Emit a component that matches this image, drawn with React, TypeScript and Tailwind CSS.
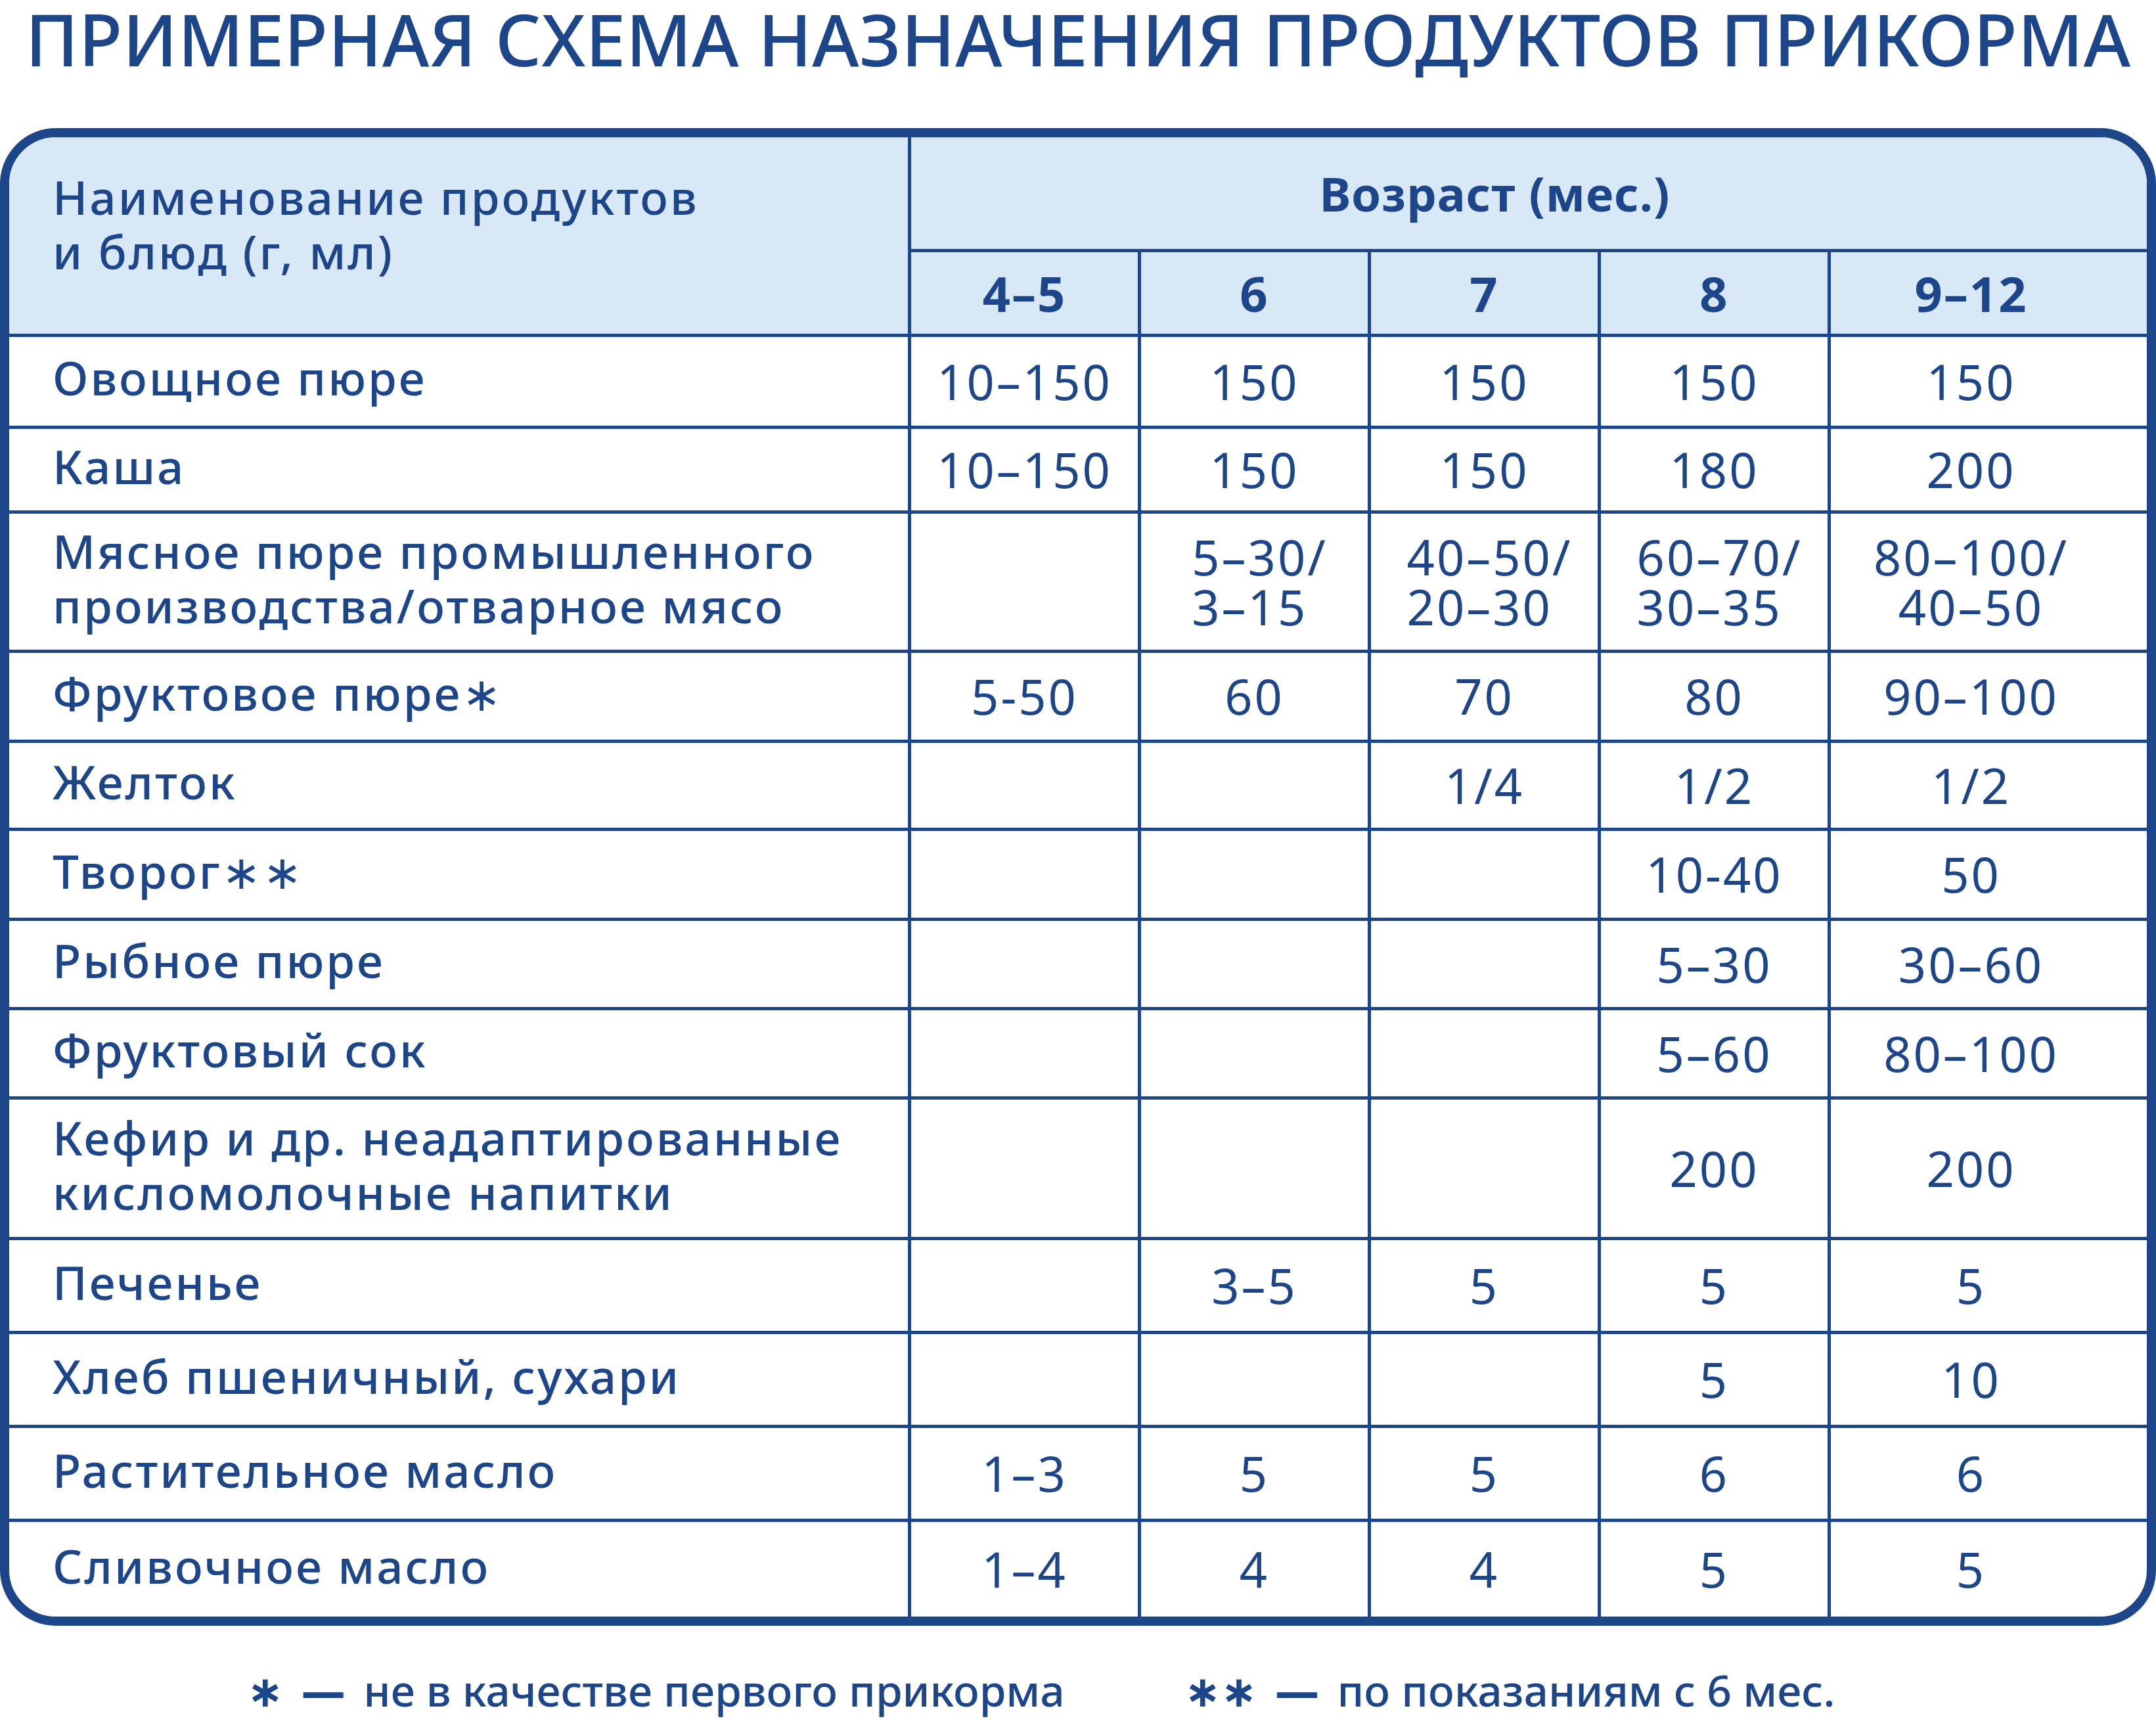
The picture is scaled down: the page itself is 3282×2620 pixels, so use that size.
import React from 'react'

// Примерная схема назначения продуктов прикорма
const BLUE = 'text-[#1d4589]'

type Cell = string | string[]

type Row = {
  label: string[]
  h: string
  values: Cell[]
  leftAlign?: boolean
}

const rows: Row[] = [
  { label: ['Овощное пюре'], h: 'h-[140px]', values: ['10–150', '150', '150', '150', '150'] },
  { label: ['Каша'], h: 'h-[129px]', values: ['10–150', '150', '150', '180', '200'] },
  {
    label: ['Мясное пюре промышленного', 'производства/отварное мясо'],
    h: 'h-[212px]',
    values: ['', ['5–30/', '3–15'], ['40–50/', '20–30'], ['60–70/', '30–35'], ['80–100/', '40–50']],
    leftAlign: true,
  },
  { label: ['Фруктовое пюре∗'], h: 'h-[137px]', values: ['5-50', '60', '70', '80', '90–100'] },
  { label: ['Желток'], h: 'h-[134px]', values: ['', '', '1/4', '1/2', '1/2'] },
  { label: ['Творог∗∗'], h: 'h-[137px]', values: ['', '', '', '10-40', '50'] },
  { label: ['Рыбное пюре'], h: 'h-[136px]', values: ['', '', '', '5–30', '30–60'] },
  { label: ['Фруктовый сок'], h: 'h-[136px]', values: ['', '', '', '5–60', '80–100'] },
  {
    label: ['Кефир и др. неадаптированные', 'кисломолочные напитки'],
    h: 'h-[214px]',
    values: ['', '', '', '200', '200'],
  },
  { label: ['Печенье'], h: 'h-[143px]', values: ['', '3–5', '5', '5', '5'] },
  { label: ['Хлеб пшеничный, сухари'], h: 'h-[143px]', values: ['', '', '', '5', '10'] },
  { label: ['Растительное масло'], h: 'h-[143px]', values: ['1–3', '5', '5', '6', '6'] },
  { label: ['Сливочное масло'], h: 'h-[149px]', values: ['1–4', '4', '4', '5', '5'] },
]

const ages = ['4–5', '6', '7', '8', '9–12']

function ValueCell({ value, last, leftAlign }: { value: Cell; last: boolean; leftAlign?: boolean }) {
  const text = Array.isArray(value) ? value.join('\n') : value
  return (
    <div
      className={`flex items-center justify-center border-l-[5px] border-[#1d4589] ${last ? 'pr-[54px]' : ''}`}
    >
      {text && (
        <div
          className={`whitespace-pre-line text-[74px] leading-[76px] font-normal tracking-[3px] ${
            leftAlign && !last ? 'text-left pl-[16px]' : 'text-center'
          }`}
        >
          {text}
        </div>
      )}
    </div>
  )
}

export default function App() {
  return (
    <div
      className={`w-[3282px] h-[2620px] bg-white ${BLUE} font-['Noto_Sans','DejaVu_Sans',sans-serif]`}
    >
      {/* Заголовок */}
      <div className="h-[195px] pt-[4px] whitespace-nowrap text-center text-[109px] leading-[109px] font-medium tracking-[0.5px]">
        ПРИМЕРНАЯ СХЕМА НАЗНАЧЕНИЯ ПРОДУКТОВ ПРИКОРМА
      </div>

      {/* Таблица */}
      <div className="overflow-hidden rounded-[85px] border-[14px] border-[#1d4589]">
        {/* Шапка */}
        <div className="grid h-[299px] grid-cols-[1368px_1fr] bg-[#d9e8f6]">
          <div className="whitespace-pre-line pt-[49px] pl-[66px] text-[71px] leading-[83px] font-medium tracking-[3px]">
            {'Наименование продуктов\nи блюд (г, мл)'}
          </div>
          <div className="flex flex-col border-l-[5px] border-[#1d4589]">
            <div className="flex h-[170px] items-center justify-center pr-[104px] text-[72px] font-bold tracking-[1px]">
              Возраст (мес.)
            </div>
            <div className="grid h-[129px] grid-cols-[345px_350px_350px_350px_1fr] border-t-[5px] border-[#1d4589]">
              {ages.map((a, i) => (
                <div
                  key={a}
                  className={`flex items-center justify-center text-[74px] font-bold tracking-[2px] ${
                    i > 0 ? 'border-l-[5px] border-[#1d4589]' : ''
                  } ${i === ages.length - 1 ? 'pr-[54px]' : ''}`}
                >
                  {a}
                </div>
              ))}
            </div>
          </div>
        </div>

        {/* Строки */}
        {rows.map((r) => (
          <div
            key={r.label[0]}
            className={`grid ${r.h} grid-cols-[1368px_350px_350px_350px_350px_1fr] border-t-[5px] border-[#1d4589]`}
          >
            <div className="flex items-center pl-[66px] pb-[12px]">
              <div className="whitespace-pre-line text-[71px] leading-[83px] font-medium tracking-[3px]">
                {r.label.join('\n')}
              </div>
            </div>
            {r.values.map((v, i) => (
              <ValueCell key={i} value={v} last={i === r.values.length - 1} leftAlign={r.leftAlign} />
            ))}
          </div>
        ))}
      </div>

      {/* Примечания */}
      <div className="mt-[64px] flex gap-[182px] pl-[376px] text-[66px] leading-[66px] font-medium">
        <div className="flex items-center gap-[28px]">
          <span className="font-bold">∗</span>
          <span className="font-black">—</span>
          <span>не в качестве первого прикорма</span>
        </div>
        <div className="flex items-center gap-[28px]">
          <span className="font-bold">∗∗</span>
          <span className="font-black">—</span>
          <span>по показаниям с 6 мес.</span>
        </div>
      </div>
    </div>
  )
}
